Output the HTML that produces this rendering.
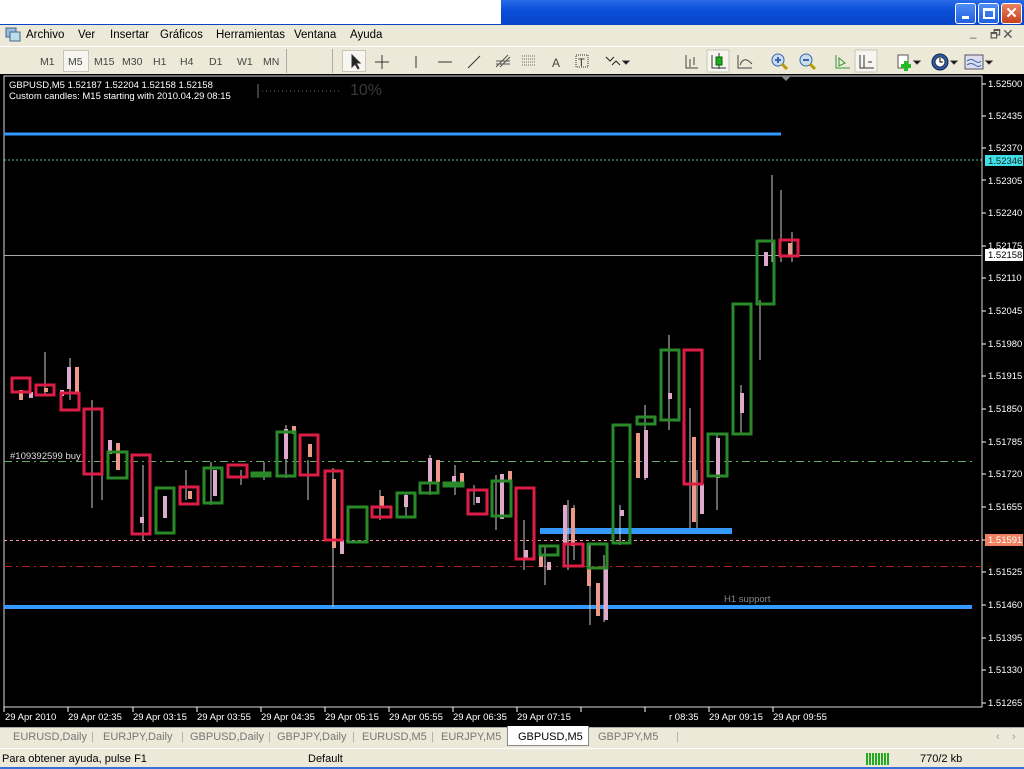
<!DOCTYPE html>
<html><head><meta charset="utf-8">
<style>
*{margin:0;padding:0;box-sizing:border-box}
body{width:1024px;height:768px;overflow:hidden;background:#ece9d8;font-family:"Liberation Sans",sans-serif;font-size:11px;position:relative}
.abs{position:absolute}
#title{left:0;top:0;width:1024px;height:25px;background:linear-gradient(#2a6be8,#0a4fd8 40%,#0845c8)}
#tw{left:0;top:0;width:501px;height:24px;background:#fff}
.wb{top:3px;width:21px;height:21px;border:1px solid #fff;border-radius:3px;background:linear-gradient(#4f8cf5,#2160e0)}
#menu{left:0;top:25px;width:1024px;height:21px;background:#ece9d8;font-size:11.5px}
#menu span{position:absolute;top:4px}
#tb{left:0;top:46px;width:1024px;height:28px;background:#ece9d8;border-top:1px solid #fff}
#tb .t{position:absolute;top:9px;color:#444;font-size:10.5px}
#chart{left:0;top:74px;width:1024px;height:653px;background:#000}
#tabs{left:0;top:727px;width:1024px;height:20px;background:#ece9d8;border-top:1px solid #aaa}
#tabs span{position:absolute;top:3px;color:#777;font-size:11px}
#status{left:0;top:748px;width:1024px;height:20px;background:#ece9d8;border-top:1px solid #fff}
</style></head><body>
<div id="title" class="abs"></div>
<div id="tw" class="abs"></div>
<div class="abs wb" style="left:955px"><div style="position:absolute;left:6px;top:12px;width:7px;height:3px;background:#fff"></div></div>
<div class="abs wb" style="left:978px"><div style="position:absolute;left:4px;top:4px;width:12px;height:11px;border:2px solid #fff;border-top-width:3px"></div></div>
<div class="abs wb" style="left:1001px;background:linear-gradient(#e8835e,#c8401e);color:#fff;font-weight:bold;font-size:15px;text-align:center;line-height:19px">✕</div>
<div id="menu" class="abs">
<svg class="abs" style="left:5px;top:2px" width="16" height="16"><rect x="1" y="1" width="10" height="9" fill="#9bd" stroke="#468"/><rect x="5" y="5" width="10" height="9" fill="#bde" stroke="#468"/></svg>
<span style="left:26px">Archivo</span><span style="left:78px">Ver</span><span style="left:110px">Insertar</span><span style="left:160px">Gráficos</span><span style="left:216px">Herramientas</span><span style="left:294px">Ventana</span><span style="left:350px">Ayuda</span>
<span style="left:970px;top:2px;color:#555">_</span><span style="left:990px;top:2px;color:#555">🗗</span><span style="left:1002px;top:1px;color:#555;font-size:14px">✕</span>
</div>
<div id="tb" class="abs">
<div class="abs" style="left:63px;top:3px;width:26px;height:22px;background:#f6f5ef;border:1px solid #c8c5b8"></div>
<span class="t" style="left:40px">M1</span><span class="t" style="left:68px">M5</span><span class="t" style="left:94px">M15</span><span class="t" style="left:122px">M30</span><span class="t" style="left:153px">H1</span><span class="t" style="left:180px">H4</span><span class="t" style="left:209px">D1</span><span class="t" style="left:237px">W1</span><span class="t" style="left:263px">MN</span>
<div class="abs" style="left:286px;top:2px;width:1px;height:24px;background:#aaa"></div>
<div class="abs" style="left:332px;top:2px;width:1px;height:24px;background:#aaa"></div>
<div class="abs" style="left:342px;top:3px;width:24px;height:22px;background:#f6f5ef;border:1px solid #c8c5b8"></div>
<svg class="abs" style="left:340px;top:0" width="660" height="28" fill="none" stroke="#333" stroke-width="1">
<path d="M12 8 L12 20 L15 17 L18 22 L19 21 L16 16 L20 16 Z" fill="#222"/>
<path d="M42 8V22M35 15H49"/>
<path d="M76 9V21"/><path d="M98 15H112"/><path d="M128 21L140 9"/>
<path d="M156 20L168 8M160 20L170 10M156 14H170M156 17H170" stroke="#555"/>
<path d="M182 9H196M182 12H196M182 15H196M182 18H196" stroke="#666" stroke-dasharray="1 1"/>
<text x="212" y="20" font-size="12" fill="#444" stroke="none" font-family="Liberation Sans">A</text>
<rect x="236" y="8" width="12" height="12" stroke-dasharray="1 1"/><text x="238" y="19" font-size="11" fill="#333" stroke="none">T</text>
<path d="M266 10l4 4 4-4M272 18l4-4 4 4" stroke="#222"/><path d="M283 14l3 3 3-3z" fill="#000"/>
<path d="M346 8V21H358M350 12V20M354 10V18" stroke="#444"/>
<rect x="367" y="3" width="22" height="22" fill="#f6f5ef" stroke="#c8c5b8"/>
<path d="M372 8V21H386M379 6V22"/><rect x="376" y="10" width="6" height="8" fill="#2a2" stroke="#060"/>
<path d="M398 8V21H412M400 18Q404 8 412 17" stroke="#444"/>
<circle cx="438" cy="13" r="6" fill="#cde" stroke="#36a"/><path d="M435 13H441M438 10V16" stroke="#36a" stroke-width="2"/><path d="M442 17L447 22" stroke="#b90" stroke-width="3"/>
<circle cx="466" cy="13" r="6" fill="#cde" stroke="#36a"/><path d="M463 13H469" stroke="#36a" stroke-width="2"/><path d="M470 17L475 22" stroke="#b90" stroke-width="3"/>
<path d="M496 8V21H510M499 11L505 16 499 19Z" stroke="#393"/>
<rect x="515" y="3" width="22" height="22" fill="#f6f5ef" stroke="#c8c5b8"/>
<path d="M520 8V21H534M524 8V21M528 15H532" stroke="#333"/>
<rect x="558" y="8" width="10" height="13" fill="#fff" stroke="#555"/><path d="M566 14V24M561 19H571" stroke="#2b2" stroke-width="4"/><path d="M574 14l3 3 3-3z" fill="#000"/>
<circle cx="600" cy="15" r="8" fill="#2a5cb0" stroke="#124"/><circle cx="600" cy="15" r="5" fill="#fff"/><path d="M600 11V15H603" stroke="#000"/><path d="M611 14l3 3 3-3z" fill="#000"/>
<rect x="625" y="8" width="18" height="14" fill="#dde" stroke="#556"/><path d="M627 14q4-3 8 0t6 0M627 18q4-3 8 0t6 0" stroke="#36a"/><path d="M646 14l3 3 3-3z" fill="#000"/>
</svg>
</div>
<div id="chart" class="abs">
<svg width="1024" height="653" style="position:absolute;left:0;top:0" font-family="Liberation Sans">
<g transform="translate(0,-74)">
<rect x="4" y="76" width="978" height="631" fill="none" stroke="#ddd" stroke-width="1"/>
<text x="9" y="88" font-size="9.5" fill="#fff">GBPUSD,M5  1.52187 1.52204 1.52158 1.52158</text>
<text x="9" y="99" font-size="9.5" fill="#fff">Custom candles: M15 starting with 2010.04.29 08:15</text>
<path d="M258 84V98" stroke="#777"/><path d="M262 91H340" stroke="#666" stroke-dasharray="1 3"/>
<text x="350" y="95" font-size="16" fill="#3a3a3a">10%</text>
<path d="M781 76l5 5 5-5z" fill="#888"/>
<!-- levels -->
<path d="M4 134H781" stroke="#3399ff" stroke-width="3"/>
<path d="M4 160H982" stroke="#8fd" stroke-width="1" stroke-dasharray="2 2" opacity=".7"/>
<path d="M4 255.5H982" stroke="#aaa" stroke-width="1"/>
<path d="M4 461.5H975" stroke="#6a6" stroke-dasharray="8 4 2 4"/>
<path d="M4 540.5H982" stroke="#f9a" stroke-dasharray="3 3"/>
<path d="M4 566.5H982" stroke="#a22" stroke-dasharray="8 4 2 4"/>
<path d="M540 531H732" stroke="#3399ff" stroke-width="6"/>
<path d="M4 607H972" stroke="#3399ff" stroke-width="4"/>
<text x="10" y="459" font-size="9.5" fill="#ddd">#109392599 buy</text>
<text x="724" y="602" font-size="9.5" fill="#888">H1 support</text>
<!-- wicks -->
<g stroke="#ccc" stroke-width="1">
<path d="M45 352V395M70 358V400M92 400V508M102 455V500M143 465V540M186 470V500M211 462V505M241 470V485M264 462V480M286 425V478M308 460V500M333 468V607M380 490V520M406 492V518M430 455V495M455 465V495M474 485V505M496 475V530M524 520V570M545 545V585M568 500V570M574 505V560M590 545V625M604 555V622M620 505V545M645 405V480M669 335V430M690 408V528M697 470V528M717 435V510M741 385V435M760 300V360M772 175V262M781 190V262M792 232V262"/>
</g>
<!-- small m5 bodies -->
<g stroke="none">
<rect x="19" y="390" width="4" height="10" fill="#e98"/><rect x="29" y="392" width="4" height="6" fill="#dac"/>
<rect x="44" y="388" width="4" height="4" fill="#e98"/><rect x="60" y="390" width="4" height="6" fill="#dac"/>
<rect x="67" y="367" width="4" height="22" fill="#dac"/><rect x="75" y="367" width="4" height="25" fill="#e98"/>
<rect x="108" y="440" width="4" height="14" fill="#dac"/><rect x="116" y="443" width="4" height="27" fill="#e98"/>
<rect x="140" y="517" width="4" height="6" fill="#dac"/><rect x="163" y="496" width="4" height="22" fill="#dac"/>
<rect x="188" y="491" width="4" height="8" fill="#e98"/><rect x="213" y="470" width="4" height="26" fill="#dac"/>
<rect x="284" y="429" width="4" height="30" fill="#dac"/><rect x="292" y="426" width="4" height="8" fill="#e98"/>
<rect x="308" y="444" width="4" height="13" fill="#e98"/><rect x="332" y="479" width="4" height="69" fill="#e98"/><rect x="340" y="540" width="4" height="14" fill="#dac"/>
<rect x="380" y="496" width="4" height="10" fill="#e98"/><rect x="404" y="495" width="4" height="12" fill="#dac"/>
<rect x="428" y="458" width="4" height="25" fill="#dac"/><rect x="436" y="460" width="4" height="22" fill="#e98"/>
<rect x="452" y="476" width="4" height="8" fill="#dac"/><rect x="460" y="473" width="4" height="10" fill="#e98"/>
<rect x="476" y="497" width="4" height="6" fill="#dac"/><rect x="500" y="474" width="4" height="45" fill="#dac"/><rect x="508" y="471" width="4" height="10" fill="#e98"/>
<rect x="524" y="550" width="4" height="8" fill="#dac"/><rect x="539" y="555" width="4" height="12" fill="#e98"/><rect x="547" y="562" width="4" height="8" fill="#dac"/>
<rect x="563" y="505" width="4" height="40" fill="#dac"/><rect x="571" y="508" width="4" height="38" fill="#e98"/>
<rect x="587" y="568" width="4" height="18" fill="#e98"/><rect x="596" y="583" width="4" height="33" fill="#e98"/><rect x="604" y="568" width="4" height="52" fill="#dac"/>
<rect x="620" y="510" width="4" height="6" fill="#dac"/><rect x="636" y="433" width="4" height="45" fill="#e98"/><rect x="644" y="430" width="4" height="48" fill="#dac"/>
<rect x="668" y="393" width="4" height="6" fill="#dac"/><rect x="692" y="437" width="4" height="85" fill="#e98"/><rect x="700" y="484" width="4" height="30" fill="#dac"/>
<rect x="716" y="438" width="4" height="40" fill="#dac"/><rect x="740" y="393" width="4" height="20" fill="#dac"/>
<rect x="764" y="252" width="4" height="14" fill="#dac"/><rect x="788" y="243" width="4" height="12" fill="#e98"/>
</g>
<!-- M15 boxes -->
<g fill="none" stroke="#dc1e46" stroke-width="3">
<rect x="12" y="378" width="18" height="14"/><rect x="36" y="385" width="18" height="10"/><rect x="61" y="393" width="18" height="17"/>
<rect x="84" y="409" width="18" height="65"/><rect x="132" y="455" width="18" height="79"/><rect x="180" y="487" width="18" height="17"/>
<rect x="228" y="465" width="19" height="12"/><rect x="300" y="435" width="18" height="40"/><rect x="325" y="471" width="17" height="69"/>
<rect x="372" y="507" width="19" height="10"/><rect x="468" y="490" width="19" height="24"/><rect x="516" y="488" width="18" height="71"/>
<rect x="564" y="544" width="19" height="22"/><rect x="684" y="350" width="18" height="134"/><rect x="780" y="240" width="18" height="16"/>
</g>
<g fill="none" stroke="#2a8a2a" stroke-width="3">
<rect x="108" y="452" width="19" height="26"/><rect x="156" y="488" width="18" height="45"/><rect x="204" y="468" width="18" height="35"/>
<rect x="252" y="473" width="18" height="3"/><rect x="277" y="432" width="18" height="44"/><rect x="348" y="507" width="19" height="35"/>
<rect x="397" y="493" width="18" height="24"/><rect x="420" y="483" width="18" height="10"/><rect x="444" y="483" width="19" height="3"/>
<rect x="492" y="481" width="19" height="35"/><rect x="540" y="546" width="18" height="9"/><rect x="588" y="544" width="19" height="24"/>
<rect x="613" y="425" width="17" height="118"/><rect x="637" y="417" width="18" height="7"/><rect x="661" y="350" width="18" height="70"/>
<rect x="708" y="434" width="19" height="42"/><rect x="733" y="304" width="18" height="130"/><rect x="757" y="241" width="17" height="63"/>
</g>
<!-- price axis -->
<g font-size="9.5" fill="#fff">
<path d="M982 84H986M982 116H986M982 148H986M982 180H986M982 213H986M982 246H986M982 278H986M982 311H986M982 344H986M982 376H986M982 409H986M982 442H986M982 474H986M982 507H986M982 540H986M982 572H986M982 605H986M982 638H986M982 670H986M982 703H986" stroke="#fff"/>
<text x="988" y="87">1.52500</text><text x="988" y="119">1.52435</text><text x="988" y="151">1.52370</text>
<text x="988" y="184">1.52305</text><text x="988" y="216">1.52240</text><text x="988" y="249">1.52175</text>
<text x="988" y="281">1.52110</text><text x="988" y="314">1.52045</text><text x="988" y="347">1.51980</text>
<text x="988" y="379">1.51915</text><text x="988" y="412">1.51850</text><text x="988" y="445">1.51785</text>
<text x="988" y="477">1.51720</text><text x="988" y="510">1.51655</text>
<text x="988" y="575">1.51525</text><text x="988" y="608">1.51460</text><text x="988" y="641">1.51395</text>
<text x="988" y="673">1.51330</text><text x="988" y="706">1.51265</text>
</g>
<rect x="985" y="155" width="38" height="11" fill="#3ee0e8"/><text x="988" y="164" font-size="9.5" fill="#222">1.52346</text>
<rect x="985" y="249" width="38" height="12" fill="#fff"/><text x="988" y="258" font-size="9.5" fill="#000">1.52158</text>
<rect x="985" y="534" width="38" height="12" fill="#f08060"/><text x="988" y="543" font-size="9.5" fill="#fff">1.51591</text>
<!-- time axis -->
<g font-size="9.5" fill="#fff">
<path d="M4 707V712M68 707V712M133 707V712M197 707V712M261 707V712M325 707V712M389 707V712M453 707V712M517 707V712M581 707V712M645 707V712M709 707V712M773 707V712" stroke="#fff"/>
<text x="5" y="720">29 Apr 2010</text><text x="68" y="720">29 Apr 02:35</text><text x="133" y="720">29 Apr 03:15</text>
<text x="197" y="720">29 Apr 03:55</text><text x="261" y="720">29 Apr 04:35</text><text x="325" y="720">29 Apr 05:15</text>
<text x="389" y="720">29 Apr 05:55</text><text x="453" y="720">29 Apr 06:35</text><text x="517" y="720">29 Apr 07:15</text>
<text x="669" y="720">r 08:35</text><text x="709" y="720">29 Apr 09:15</text><text x="773" y="720">29 Apr 09:55</text>
</g>
</g>
</svg>
</div>
<div id="tabs" class="abs">
<div class="abs" style="left:507px;top:-2px;width:82px;height:20px;background:#fff;border:1px solid #888;border-top:none"></div>
<span style="left:13px">EURUSD,Daily</span><span style="left:91px;color:#aaa">|</span><span style="left:103px">EURJPY,Daily</span><span style="left:181px;color:#aaa">|</span><span style="left:190px">GBPUSD,Daily</span><span style="left:268px;color:#aaa">|</span><span style="left:277px">GBPJPY,Daily</span><span style="left:352px;color:#aaa">|</span><span style="left:362px">EURUSD,M5</span><span style="left:431px;color:#aaa">|</span><span style="left:441px">EURJPY,M5</span>
<span style="left:518px;color:#000">GBPUSD,M5</span><span style="left:598px">GBPJPY,M5</span><span style="left:676px;color:#aaa">|</span>
<span style="left:996px;color:#999">‹</span><span style="left:1012px;color:#999">›</span>
</div>
<div id="status" class="abs">
<span class="abs" style="left:2px;top:4px">Para obtener ayuda, pulse F1</span>
<span class="abs" style="left:308px;top:4px">Default</span>
<div class="abs" style="left:866px;top:4px;width:24px;height:12px;background:repeating-linear-gradient(90deg,#2a2 0 2px,#ece9d8 2px 3px)"></div>
<span class="abs" style="left:920px;top:4px">770/2 kb</span>
<div class="abs" style="left:0;top:18px;width:1024px;height:2px;background:#3a6fd8"></div>
</div>
</body></html>
